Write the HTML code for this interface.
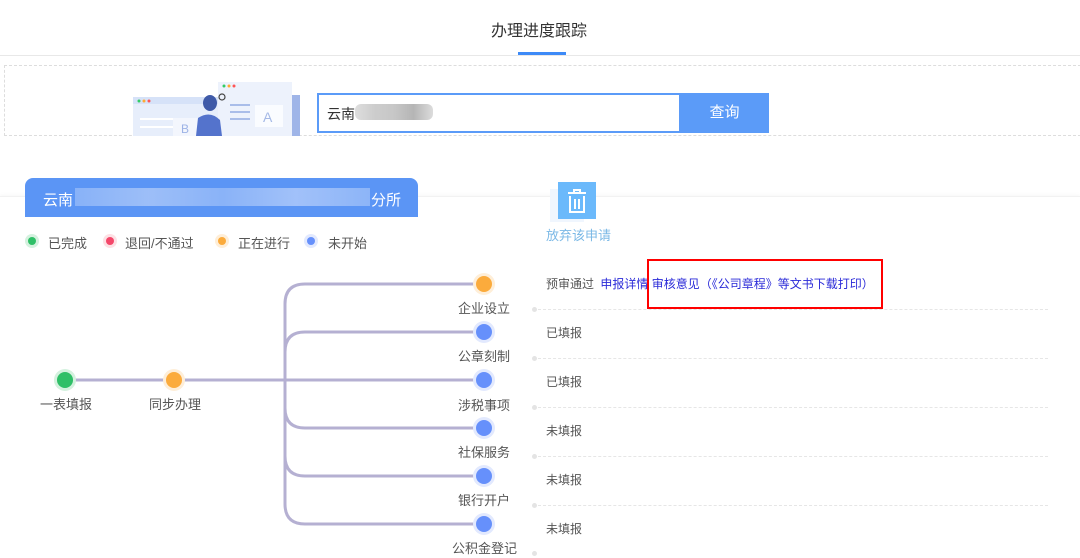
<!DOCTYPE html>
<html><head><meta charset="utf-8"><style>
body{margin:0;width:1080px;height:557px;overflow:hidden;background:#fff;font-family:"Liberation Sans","Noto Sans CJK SC",sans-serif;position:relative;color:#555;}
.a{position:absolute;}
.t{font-size:13px;white-space:nowrap;}
.sep{position:absolute;left:538px;width:510px;border-top:1px dashed #e6e6e6;}
.dot{position:absolute;left:532px;width:5px;height:5px;border-radius:50%;background:#e4e4e4;}
</style></head><body>
<div class="a" style="left:0;top:0;width:1080px;height:55px;border-bottom:1px solid #e8e8e8"></div>
<div class="a t" style="left:491px;top:17px;font-size:16px;color:#333">办理进度跟踪</div>
<div class="a" style="left:518px;top:52px;width:48px;height:3px;background:#3d8af7"></div>
<div class="a" style="left:4px;top:65px;width:1080px;height:69px;border:1px dashed #ddd"></div>
<!-- illustration -->
<svg class="a" style="left:130px;top:80px" width="175" height="56">
<rect x="3" y="17" width="160" height="39" fill="#e7eefb"/>
<rect x="3" y="17" width="160" height="7" fill="#d6e2f8"/>
<circle cx="9" cy="21" r="1.5" fill="#3c6"/><circle cx="14" cy="21" r="1.5" fill="#fa3"/><circle cx="19" cy="21" r="1.5" fill="#f55"/>
<rect x="10" y="38" width="34" height="2" fill="#fff"/><rect x="10" y="46" width="34" height="2" fill="#fff"/>
<rect x="43" y="38" width="28" height="18" fill="#f3f6fd"/><text x="51" y="53" font-size="12" fill="#9db3e6" font-family="Liberation Sans">B</text>
<rect x="88" y="2" width="74" height="54" fill="#edf2fc"/><rect x="162" y="15" width="8" height="41" fill="#9fb5e8"/>
<circle cx="94" cy="6" r="1.5" fill="#3c6"/><circle cx="99" cy="6" r="1.5" fill="#fa3"/><circle cx="104" cy="6" r="1.5" fill="#f55"/>
<rect x="125" y="25" width="28" height="22" fill="#fafcff"/><text x="133" y="42" font-size="14" fill="#a5b9e6" font-family="Liberation Sans">A</text>
<rect x="100" y="24" width="20" height="2" fill="#a9bde9"/><rect x="100" y="31" width="20" height="2" fill="#a9bde9"/><rect x="100" y="38" width="20" height="2" fill="#a9bde9"/>
<ellipse cx="80" cy="23" rx="7" ry="8" fill="#3f5aa8"/>
<path d="M66 56 L68 38 Q80 30 90 40 L92 56Z" fill="#5473cc"/>
<circle cx="92" cy="17" r="3" fill="none" stroke="#444" stroke-width="1.2"/>
</svg>
<div class="a" style="left:317px;top:93px;width:360px;height:36px;border:2px solid #5b9bf8;background:#fff"></div>
<div class="a t" style="left:327px;top:104px;font-size:14px;color:#333">云南</div>
<div class="a" style="left:355px;top:104px;width:78px;height:16px;background:linear-gradient(90deg,#d8d8d8,#c4c4c4,#bdbdbd,#a8a8a8,#d6d6d6);border-radius:6px;opacity:.85"></div>
<div class="a" style="left:680px;top:93px;width:89px;height:40px;background:#5b9bf8;color:#fff;font-size:15px;text-align:center;line-height:40px">查询</div>
<!-- card -->
<div class="a" style="left:0;top:196px;width:1080px;height:361px;box-shadow:0 -1px 4px rgba(0,0,0,.04);border-top:1px solid #f2f2f2"></div>
<div class="a" style="left:25px;top:178px;width:393px;height:39px;background:#5b95f5;border-radius:8px 8px 0 0"></div>
<div class="a t" style="left:43px;top:189px;font-size:15px;color:#fff">云南</div>
<div class="a" style="left:75px;top:188px;width:295px;height:18px;background:linear-gradient(90deg,#8db5f8,#a4c3f9,#8fb6f8,#a9c6fa,#92b8f8);opacity:.9"></div>
<div class="a t" style="left:371px;top:189px;font-size:15px;color:#fff">分所</div>
<!-- legend -->
<div class="a" style="left:25px;top:234px;width:14px;height:14px;border-radius:50%;background:#d5f1df"></div><div class="a" style="left:28px;top:237px;width:8px;height:8px;border-radius:50%;background:#2fbf67"></div>
<div class="a t" style="left:48px;top:233px">已完成</div>
<div class="a" style="left:103px;top:234px;width:14px;height:14px;border-radius:50%;background:#fde0e4"></div><div class="a" style="left:106px;top:237px;width:8px;height:8px;border-radius:50%;background:#f4476a"></div>
<div class="a t" style="left:125px;top:233px">退回/不通过</div>
<div class="a" style="left:215px;top:234px;width:14px;height:14px;border-radius:50%;background:#feeed8"></div><div class="a" style="left:218px;top:237px;width:8px;height:8px;border-radius:50%;background:#fbab3c"></div>
<div class="a t" style="left:238px;top:233px">正在进行</div>
<div class="a" style="left:304px;top:234px;width:14px;height:14px;border-radius:50%;background:#e2e9fe"></div><div class="a" style="left:307px;top:237px;width:8px;height:8px;border-radius:50%;background:#6690fb"></div>
<div class="a t" style="left:328px;top:233px">未开始</div>
<!-- trash -->
<div class="a" style="left:550px;top:189px;width:34px;height:33px;background:#f0f6fe"></div>
<div class="a" style="left:558px;top:182px;width:38px;height:37px;background:#6bb9fb"></div>
<svg class="a" style="left:558px;top:182px" width="38" height="37"><g stroke="#fff" stroke-width="2" fill="none"><path d="M10 11H28M16 11V8H22V11"/><path d="M12 14V30H26V14"/><path d="M17 17V27M21 17V27"/></g></svg>
<div class="a t" style="left:546px;top:225px;color:#7cb9e6">放弃该申请</div>
<!-- tree -->
<svg class="a" style="left:0;top:260px" width="540" height="297">
<g stroke="#b5b0d2" stroke-width="3" fill="none">
<path d="M65 120H484"/>
<path d="M484 24H305Q285 24 285 44V244Q285 264 305 264H484"/>
<path d="M484 72H305Q285 72 285 92"/>
<path d="M285 148Q285 168 305 168H484"/>
<path d="M285 196Q285 216 305 216H484"/>
</g>
<circle cx="65" cy="120" r="11" fill="#d4f1de"/><circle cx="65" cy="120" r="8" fill="#2fbf67"/>
<circle cx="174" cy="120" r="11" fill="#feeed8"/><circle cx="174" cy="120" r="8" fill="#fbab3c"/>
<circle cx="484" cy="24" r="11" fill="#feeed8"/><circle cx="484" cy="24" r="8" fill="#fbab3c"/>
<g fill="#e2e9fe"><circle cx="484" cy="72" r="11"/><circle cx="484" cy="120" r="11"/><circle cx="484" cy="168" r="11"/><circle cx="484" cy="216" r="11"/><circle cx="484" cy="264" r="11"/></g>
<g fill="#6690fb"><circle cx="484" cy="72" r="8"/><circle cx="484" cy="120" r="8"/><circle cx="484" cy="168" r="8"/><circle cx="484" cy="216" r="8"/><circle cx="484" cy="264" r="8"/></g>
</svg>
<div class="a t" style="left:40px;top:394px">一表填报</div>
<div class="a t" style="left:149px;top:394px">同步办理</div>
<div class="a t" style="left:458px;top:298px">企业设立</div>
<div class="a t" style="left:458px;top:346px">公章刻制</div>
<div class="a t" style="left:458px;top:395px">涉税事项</div>
<div class="a t" style="left:458px;top:442px">社保服务</div>
<div class="a t" style="left:458px;top:490px">银行开户</div>
<div class="a t" style="left:452px;top:538px">公积金登记</div>
<!-- rows -->
<div class="a t" style="left:546px;top:275px;font-size:12px">预审通过 <span style="color:#2a2ad8;margin-left:3px">申报详情</span> <span style="color:#2a2ad8">审核意见（《公司章程》等文书下载打印）</span></div>
<div class="a" style="left:647px;top:259px;width:232px;height:46px;border:2px solid #f00"></div>
<div class="sep" style="top:309px"></div><div class="dot" style="top:307px"></div>
<div class="sep" style="top:358px"></div><div class="dot" style="top:356px"></div>
<div class="sep" style="top:407px"></div><div class="dot" style="top:405px"></div>
<div class="sep" style="top:456px"></div><div class="dot" style="top:454px"></div>
<div class="sep" style="top:505px"></div><div class="dot" style="top:503px"></div>
<div class="dot" style="top:551px"></div>
<div class="a t" style="left:546px;top:324px;font-size:12px">已填报</div>
<div class="a t" style="left:546px;top:373px;font-size:12px">已填报</div>
<div class="a t" style="left:546px;top:422px;font-size:12px">未填报</div>
<div class="a t" style="left:546px;top:471px;font-size:12px">未填报</div>
<div class="a t" style="left:546px;top:520px;font-size:12px">未填报</div>
</body></html>
